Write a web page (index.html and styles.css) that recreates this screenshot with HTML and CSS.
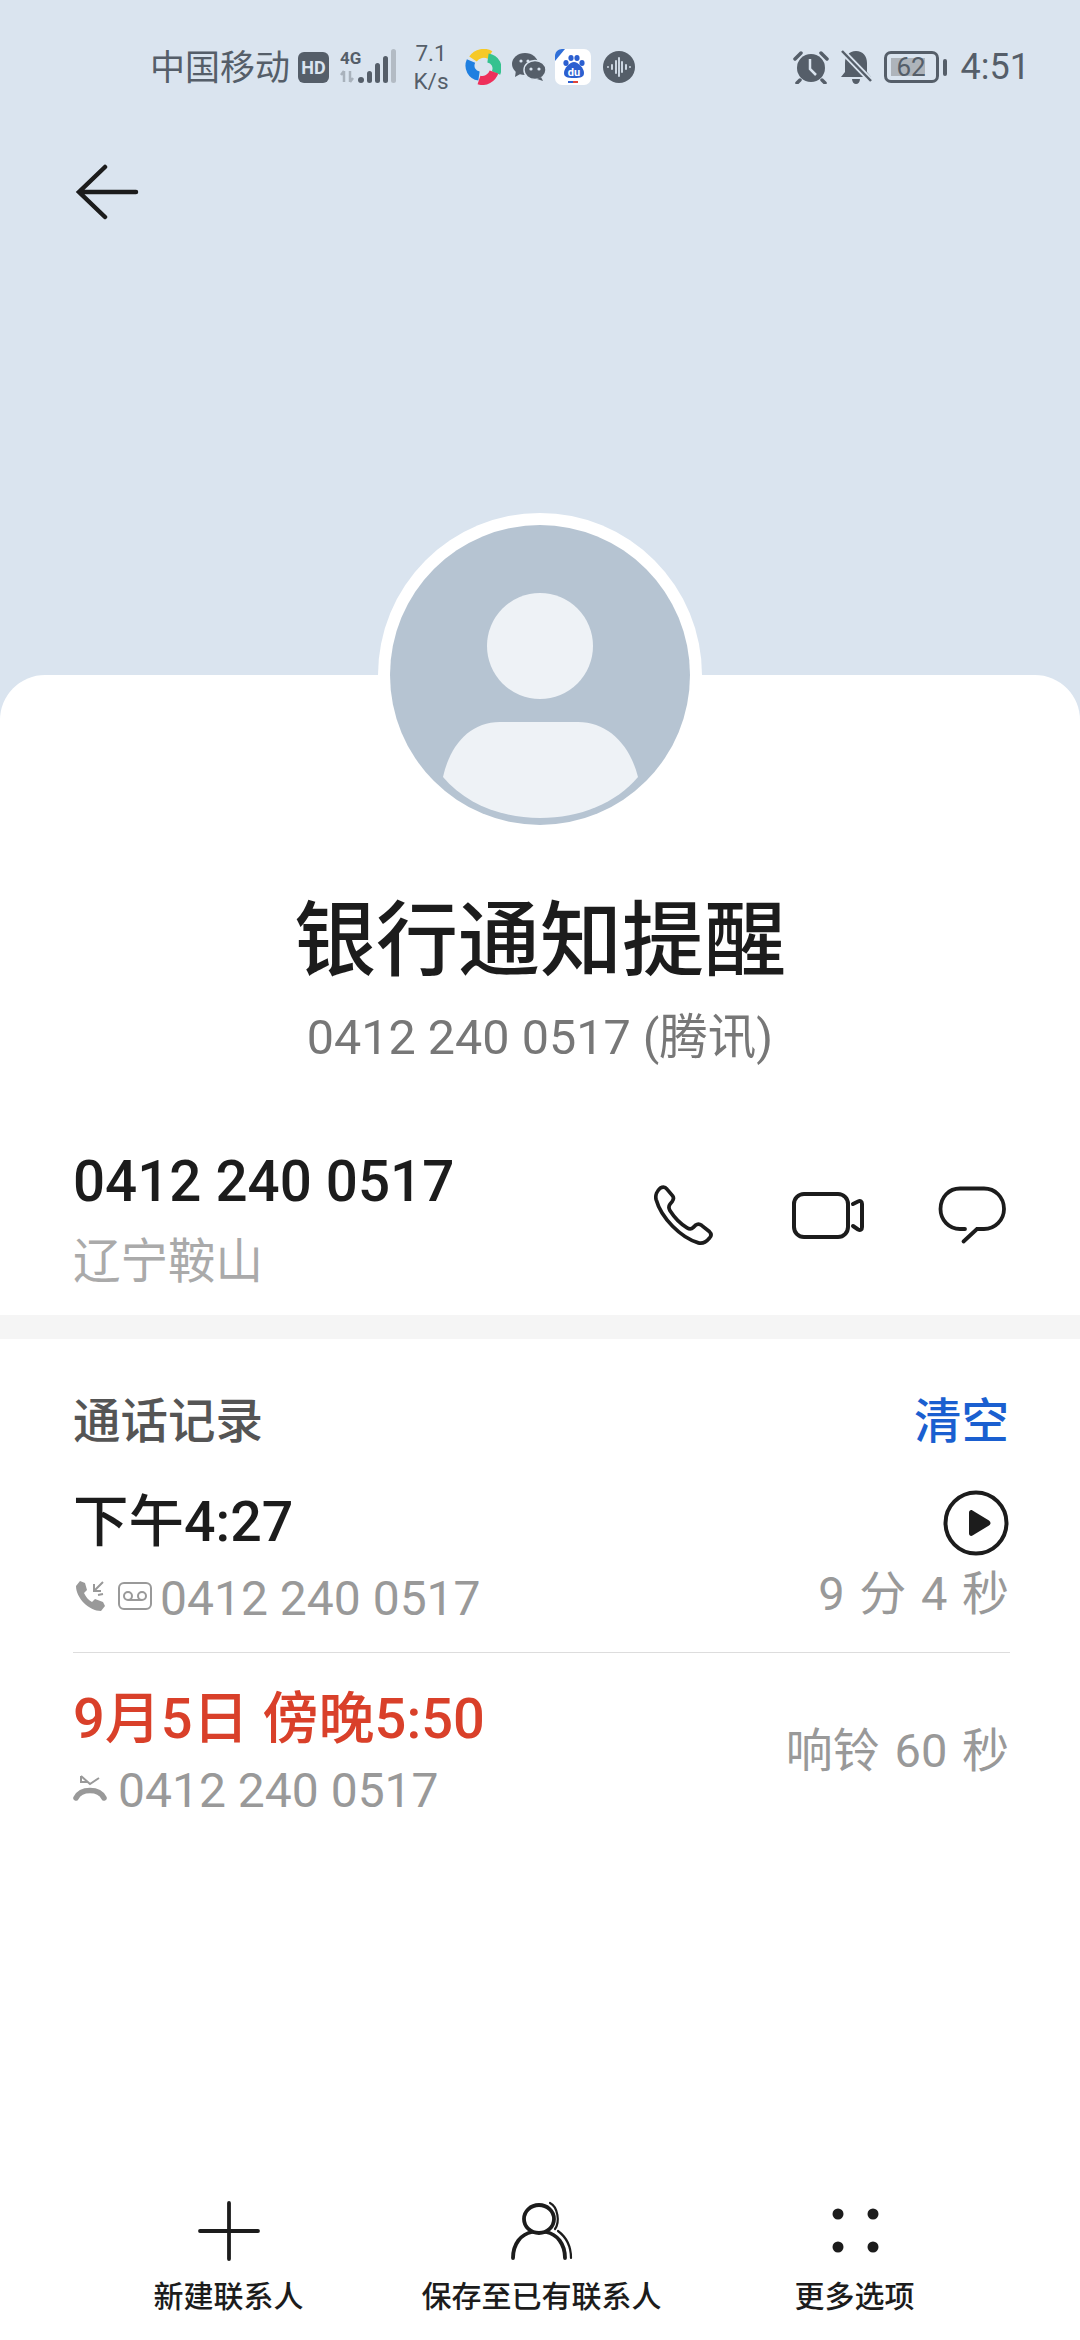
FILE: index.html
```html
<!DOCTYPE html>
<html lang="zh-CN">
<head>
  <meta charset="UTF-8">
  <meta name="viewport" content="width=device-width, initial-scale=1.0">
  <title>银行通知提醒</title>
  <link rel="stylesheet" href="styles.css">
</head>
<body>

  <div class="header">
    <div class="status">
      <div class="status-left">
        <span class="carrier">中国移动</span>
        <span class="hd">HD</span>
        <svg class="signal" viewBox="0 0 56 36">
          <text x="0" y="15" class="g4">4G</text>
          <path d="M4 22v11M1 26l3-4M10 22v11M10 33l3-4" stroke="#a9b2bc" stroke-width="2.5" fill="none"/>
          <circle cx="21" cy="31" r="3" fill="#555e69"/>
          <rect x="27" y="22" width="5" height="12" rx="2.5" fill="#555e69"/>
          <rect x="35" y="14" width="5" height="20" rx="2.5" fill="#555e69"/>
          <rect x="43" y="7" width="5" height="27" rx="2.5" fill="#555e69"/>
          <rect x="51" y="0" width="5" height="34" rx="2.5" fill="#b3bbc4"/>
        </svg>
        <span class="speed">7.1<br>K/s</span>
        <svg class="app-pin" viewBox="0 0 36 36" fill="none" stroke-width="9">
          <path d="M8 10C12 4 20 3 25 6" stroke="#f6c927"/>
          <path d="M23 9C30 10 34 17 31 24" stroke="#35c28f"/>
          <path d="M29 23C27 29 20 33 14 31" stroke="#ee2f5a"/>
          <path d="M14 27C7 26 3 19 6 12" stroke="#1f7fe0"/>
        </svg>
        <svg class="app-chat" viewBox="0 0 34 28" fill="#555e69">
          <ellipse cx="13" cy="11" rx="13" ry="11"/>
          <path d="M4 17l-1 7 7-4z"/>
          <ellipse cx="23" cy="17" rx="11" ry="9.5" stroke="#dae4ef" stroke-width="1.5"/>
          <path d="M29 24l2 4-6-2z"/>
          <circle cx="9" cy="8" r="1.6" fill="#dae4ef"/>
          <circle cx="16" cy="8" r="1.6" fill="#dae4ef"/>
          <circle cx="19" cy="16" r="1.6" fill="#dae4ef"/>
          <circle cx="27" cy="16" r="1.6" fill="#dae4ef"/>
        </svg>
        <svg class="app-baidu" viewBox="0 0 36 36">
          <rect width="36" height="36" rx="7" fill="#fff"/>
          <path d="M0 12V7C0 3 3 0 7 0h3z" fill="#2f6fd8"/>
          <g fill="#2b5fd0">
            <ellipse cx="11" cy="14" rx="2.6" ry="3"/>
            <ellipse cx="16" cy="9" rx="2.6" ry="3"/>
            <ellipse cx="22" cy="9" rx="2.6" ry="3"/>
            <ellipse cx="27" cy="14" rx="2.6" ry="3"/>
            <path d="M19 13c4 0 10 6 10 11 0 4-3 5-10 5s-10-1-10-5c0-5 6-11 10-11z"/>
          </g>
          <text x="19" y="27" class="du">du</text>
          <rect x="13" y="32" width="5" height="2" fill="#2b5fd0"/>
          <rect x="18" y="32" width="5" height="2" fill="#e0443a"/>
        </svg>
        <svg class="app-audio" viewBox="0 0 32 32">
          <circle cx="16" cy="16" r="16" fill="#555e69"/>
          <path d="M5 16v0M9 14v4M13 10v12M16 7v18M19 11v10M23 14v4M27 16v0" stroke="#dae4ef" stroke-width="1.8" stroke-linecap="round"/>
        </svg>
      </div>
      <div class="status-right">
        <svg class="ic-alarm" viewBox="0 0 36 34" fill="#555e69">
          <circle cx="18" cy="18" r="14"/>
          <path d="M2 9l6-6M34 9l-6-6M7 30l-3 3M29 30l3 3" stroke="#555e69" stroke-width="3.5" stroke-linecap="round"/>
          <path d="M17 9v10l6 6" stroke="#dae4ef" stroke-width="2.5" fill="none"/>
        </svg>
        <svg class="ic-bell" viewBox="0 0 34 34" fill="#555e69">
          <path d="M17 1c7 0 11 5 11 12v9l4 5H2l4-5v-9C6 6 10 1 17 1z"/>
          <path d="M13 29h8c0 3-2 5-4 5s-4-2-4-5z"/>
          <path d="M3 1l29 30" stroke="#dae4ef" stroke-width="6"/>
          <path d="M3 1l29 30" stroke="#555e69" stroke-width="2.5"/>
        </svg>
        <div class="battery">
          <div class="battery-body">
            <div class="battery-fill" style="width: 85%"></div>
            <span class="battery-num">62</span>
          </div>
          <div class="battery-tip"></div>
        </div>
        <span class="clock">4:51</span>
      </div>
    </div>
    <svg class="back" viewBox="0 0 64 56" fill="none" stroke="#1c1c1c" stroke-width="4.5" stroke-linecap="round">
      <path d="M61 28H5M30 3L4 28l26 25"/>
    </svg>
  </div>

  <div class="card">
    <div class="avatar">
      <svg viewBox="0 0 300 300">
        <circle cx="150" cy="150" r="150" fill="#b6c4d2"/>
        <circle cx="150" cy="121" r="53" fill="#eef2f6"/>
        <path d="M53 252C60 220 80 197 110 197H188C218 197 240 220 248 252C226 278 190 293 150 293C110 293 75 278 53 252Z" fill="#eef2f6"/>
      </svg>
    </div>

    <h1 class="name">银行通知提醒</h1>
    <p class="sub">0412 240 0517 (腾讯)</p>

    <div class="contact">
      <div>
        <div class="number">0412 240 0517</div>
        <div class="place">辽宁鞍山</div>
      </div>
      <div class="actions">
        <svg class="ic-phone" viewBox="0 0 60 60" fill="none" stroke="#1c1c1c" stroke-width="3.6" stroke-linejoin="round">
          <path d="M7 4C9.5 2.5 12 3 13.5 5L19 11.5C20.5 13.5 20 15 18.5 17L16.5 19.5C15 21.5 15 23.5 16.5 26C21 33 27 39 33 42.5C35.5 44 37.5 43.5 39 42L41 40C43 38.5 45 38.5 47 40L54.5 46C56.5 48 56.5 50.5 54.5 52.5C51.5 56 47.5 58 44 57C27 52 8 33 3 15C2 11 4 6.5 7 4Z"/>
        </svg>
        <svg class="ic-video" viewBox="0 0 75 52" fill="none" stroke="#1c1c1c" stroke-width="4" stroke-linecap="round">
          <rect x="4" y="5" width="54" height="43" rx="10"/>
          <path d="M63 15L68 12.500C70.500 11.500 72 12.500 72 15V38C72 40.500 70.500 41.500 68 40.500L63 37"/>
        </svg>
        <svg class="ic-bubble" viewBox="0 0 70 60" fill="none" stroke="#1c1c1c" stroke-width="3.8" stroke-linecap="round">
          <path d="M28 44H23C12 44 3.500 35 3.500 24C3.500 12 12 3.500 23 3.500H47C58 3.500 67 12 67 24C67 35 58 44 47 44H40L26.500 56.500"/>
        </svg>
      </div>
    </div>

    <div class="band"></div>

    <div class="log">
      <div class="log-head">
        <span class="log-title">通话记录</span>
        <span class="log-clear">清空</span>
      </div>

      <div class="call call-first">
        <div>
          <div class="call-time">下午4:27</div>
          <div class="call-num">
            <svg class="ic-in" viewBox="0 0 32 32" fill="#999">
              <path d="M5 1l5 2 2 7-3 3c2 4 4 7 8 9l3-3 8 3 2 4-4 5C14 31 1 18 1 6z"/>
              <path d="M28 2L19 11M19 4v7h7M23 15l5-1" stroke="#999" stroke-width="2" fill="none"/>
            </svg>
            <svg class="ic-vm" viewBox="0 0 34 28" fill="none" stroke="#999" stroke-width="2">
              <rect x="1" y="1" width="32" height="26" rx="5"/>
              <circle cx="10" cy="14" r="4"/>
              <circle cx="24" cy="14" r="4"/>
              <path d="M10 18H24"/>
            </svg>
            <span>0412 240 0517</span>
          </div>
        </div>
        <div class="call-right">
          <svg class="ic-play" viewBox="0 0 66 66">
            <circle cx="33" cy="33" r="30.500" fill="none" stroke="#1c1c1c" stroke-width="4"/>
            <path d="M26 22.500C26 20.500 28 19.500 29.500 20.500L46 30.500C48 32 48 34 46 35.500L29.500 45.500C28 46.500 26 45.500 26 43.500Z" fill="#1c1c1c"/>
          </svg>
          <div class="call-len">9 分 4 秒</div>
        </div>
      </div>

      <div class="call call-second">
        <div>
          <div class="call-time missed">9月5日 傍晚5:50</div>
          <div class="call-num">
            <svg class="ic-missed" viewBox="0 0 34 28" fill="none" stroke="#999">
              <path d="M3 24C8 14 26 14 31 24" stroke-width="5.500" stroke-linecap="round"/>
              <path d="M8 2v6h6M8 2l9 8 9-6" stroke-width="2"/>
            </svg>
            <span>0412 240 0517</span>
          </div>
        </div>
        <div class="call-right">
          <div class="call-len">响铃 60 秒</div>
        </div>
      </div>
    </div>

    <div class="bottom">
      <div class="bottom-item">
        <svg class="bottom-icon" viewBox="0 0 66 60" fill="none" stroke="#1c1c1c" stroke-width="3.800" stroke-linecap="round">
          <path d="M33 2V58M4 30H62"/>
        </svg>
        <span>新建联系人</span>
      </div>
      <div class="bottom-item">
        <svg class="bottom-icon" viewBox="0 0 66 60" fill="none" stroke="#1c1c1c" stroke-linecap="round">
          <ellipse cx="30" cy="18" rx="15" ry="14" stroke-width="3.800"/>
          <path d="M4 57C4 43 12 33 23 31M37 31C48 33 56 43 56 57" stroke-width="3.800"/>
          <path d="M41 2C49 6 51 21 46 28M49 30C57 36 62 46 62 57" stroke-width="2.200"/>
        </svg>
        <span>保存至已有联系人</span>
      </div>
      <div class="bottom-item">
        <svg class="bottom-icon" viewBox="0 0 66 60" fill="#1c1c1c">
          <circle cx="16" cy="13" r="5.500"/>
          <circle cx="51" cy="13" r="5.500"/>
          <circle cx="16" cy="46" r="5.500"/>
          <circle cx="51" cy="46" r="5.500"/>
        </svg>
        <span>更多选项</span>
      </div>
    </div>
  </div>

</body>
</html>
```

FILE: styles.css
```css
* {
  box-sizing: border-box;
}

body {
  margin: 0;
  width: 1080px;
  height: 2340px;
  overflow: hidden;
  display: flex;
  flex-direction: column;
  background: #dae4ef;
  font-family: Roboto, "Noto Sans CJK SC", sans-serif;
  color: #1c1c1c;
}

svg {
  display: block;
  flex: none;
}

.header {
  height: 675px;
  flex: none;
}

/* status bar */
.status {
  display: flex;
  justify-content: space-between;
  align-items: center;
  height: 134px;
  padding: 0 50px 0 150px;
  color: #555e69;
}

.status-left,
.status-right {
  display: flex;
  align-items: center;
}

.carrier {
  margin-top: -5px;
  font-size: 35px;
}

.hd {
  width: 31px;
  height: 31px;
  margin-left: 8px;
  border-radius: 6px;
  background: #555e69;
  color: #dae4ef;
  font-size: 18px;
  font-weight: 700;
  line-height: 31px;
  text-align: center;
}

.signal {
  width: 56px;
  height: 36px;
  margin-left: 11px;
}

.g4 {
  font: 700 17px Roboto, sans-serif;
  fill: #555e69;
}

.speed {
  width: 36px;
  margin-left: 17px;
  font-size: 22.500px;
  line-height: 28px;
  text-align: center;
}

.app-pin {
  width: 36px;
  height: 36px;
  margin-left: 16px;
}

.app-chat {
  width: 34px;
  height: 28px;
  margin-left: 11px;
}

.app-baidu {
  width: 36px;
  height: 36px;
  margin-left: 9px;
}

.du {
  font: 700 11px Roboto, sans-serif;
  fill: #fff;
  text-anchor: middle;
}

.app-audio {
  width: 32px;
  height: 32px;
  margin-left: 12px;
}

.ic-alarm {
  width: 36px;
  height: 34px;
}

.ic-bell {
  width: 34px;
  height: 34px;
  margin-left: 10px;
}

.battery {
  display: flex;
  align-items: center;
  margin-left: 11px;
}

.battery-body {
  position: relative;
  width: 55px;
  height: 32px;
  padding: 4px;
  border: 3px solid #555e69;
  border-radius: 7px;
}

.battery-fill {
  height: 100%;
  background: #aeb4bb;
}

.battery-num {
  position: absolute;
  inset: 0;
  font-size: 26px;
  line-height: 26px;
  text-align: center;
}

.battery-tip {
  width: 4px;
  height: 17px;
  margin-left: 4px;
  border-radius: 2px;
  background: #555e69;
}

.clock {
  margin-left: 14px;
  font-size: 36px;
}

.back {
  width: 64px;
  height: 56px;
  margin: 30px 0 0 75px;
}

/* white sheet */
.card {
  position: relative;
  flex: 1;
  display: flex;
  flex-direction: column;
  padding-top: 216px;
  border-radius: 45px 45px 0 0;
  background: #fff;
}

.avatar {
  position: absolute;
  top: -162px;
  left: 378px;
  width: 324px;
  height: 324px;
  padding: 12px;
  border-radius: 50%;
  background: #fff;
}

.name {
  margin: 0;
  font-size: 82px;
  font-weight: 500;
  line-height: 100px;
  text-align: center;
}

.sub {
  margin: 17px 0 0;
  color: #777;
  font-size: 48.500px;
  line-height: 60px;
  text-align: center;
}

.contact {
  display: flex;
  justify-content: space-between;
  align-items: center;
  margin-top: 79px;
  padding: 0 73px;
}

.number {
  font-size: 56.500px;
  font-weight: 500;
  line-height: 70px;
}

.place {
  margin-top: 15px;
  color: #aaa;
  font-size: 47.500px;
  line-height: 60px;
}

.actions {
  display: flex;
  align-items: center;
  margin-top: -10px;
}

.ic-phone {
  width: 62px;
  height: 62px;
}

.ic-video {
  width: 75px;
  height: 52px;
  margin-left: 75px;
}

.ic-bubble {
  width: 70px;
  height: 60px;
  margin-left: 72px;
}

.band {
  height: 24px;
  margin-top: 23px;
  background: #f5f5f5;
}

/* call log */
.log {
  padding: 0 71px 0 73px;
}

.log-head {
  display: flex;
  justify-content: space-between;
  margin-top: 53px;
  font-size: 47.500px;
  font-weight: 500;
  line-height: 60px;
}

.log-title {
  color: #555;
}

.log-clear {
  color: #1a5fd0;
}

.call {
  display: flex;
  justify-content: space-between;
  align-items: center;
}

.call-first {
  padding: 39px 0 23px;
  margin-right: -1px;
  border-bottom: 1px solid #ddd;
}

.call-second {
  padding-top: 34px;
}

.call-time {
  font-size: 55.500px;
  font-weight: 500;
  line-height: 64px;
}

.missed {
  color: #d9402a;
  font-size: 56px;
}

.call-num {
  display: flex;
  align-items: center;
  margin-top: 14px;
  color: #999;
  font-size: 48px;
  line-height: 60px;
}

.call-second .call-num {
  margin-top: 10px;
}

.ic-in {
  width: 32px;
  height: 32px;
  margin: -6px 0 0 2px;
}

.ic-vm {
  width: 34px;
  height: 28px;
  margin: -6px 8px 0 11px;
}

.ic-missed {
  width: 34px;
  height: 28px;
  margin: -6px 11px 0 0;
}

.call-right {
  display: flex;
  flex-direction: column;
  align-items: flex-end;
}

.call-first .call-right {
  margin: -6px 1px 0 0;
}

.call-second .call-right {
  margin-top: -6px;
}

.ic-play {
  width: 66px;
  height: 66px;
}

.call-len {
  margin-top: 8px;
  color: #999;
  font-size: 47px;
  line-height: 60px;
  word-spacing: 3px;
}

.call-second .call-len {
  margin: 0;
}

/* bottom actions */
.bottom {
  display: grid;
  grid-template-columns: repeat(3, 313px);
  margin-top: auto;
  padding: 0 72px 23px;
}

.bottom-item {
  display: flex;
  flex-direction: column;
  align-items: center;
  font-size: 30px;
  font-weight: 500;
  line-height: 40px;
}

.bottom-icon {
  width: 66px;
  height: 60px;
  margin-bottom: 16px;
}
```
